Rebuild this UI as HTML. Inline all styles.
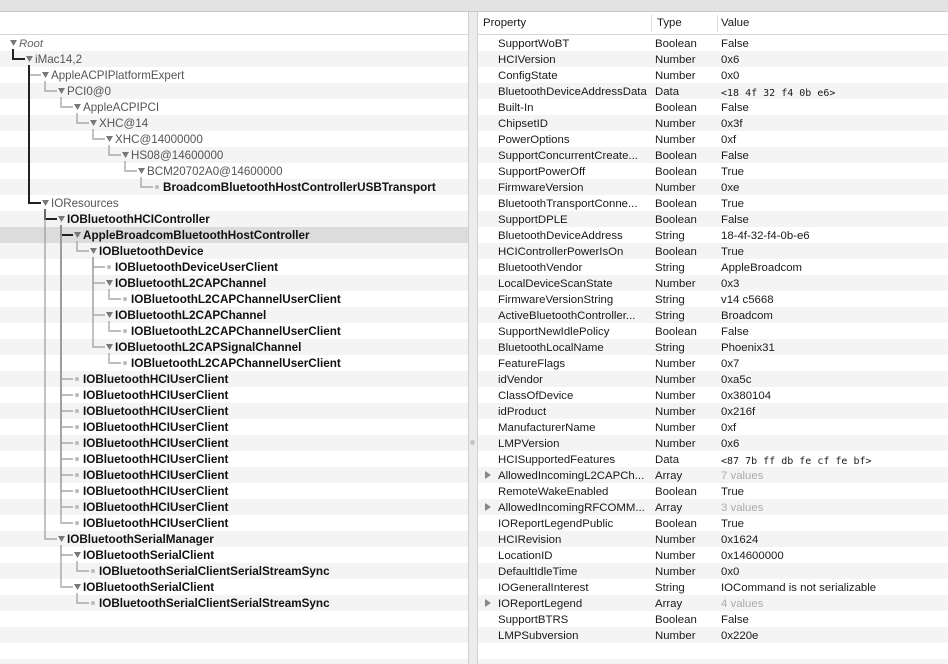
<!DOCTYPE html>
<html><head><meta charset="utf-8">
<style>
*{margin:0;padding:0;box-sizing:border-box}
body{width:948px;height:664px;overflow:hidden;background:#ececec;font-family:"Liberation Sans",Arial,sans-serif;font-size:11.4px;color:#1a1a1a;position:relative}
#top{position:absolute;left:0;top:0;width:948px;height:12px;background:#e3e3e3;border-bottom:1px solid #c8c8c8}
#left{position:absolute;left:0;top:12px;width:468px;height:652px;background:#fff;overflow:hidden}
#div{position:absolute;left:468px;top:12px;width:10px;height:652px;background:#ececec;border-left:1px solid #d0d0d0;border-right:1px solid #d0d0d0}
#dot{position:absolute;left:470px;top:440px;width:5px;height:5px;border-radius:50%;background:#c4c4c4}
#right{position:absolute;left:478px;top:12px;width:470px;height:652px;background:#fff;overflow:hidden}
.hdr{position:absolute;left:0;top:0;width:100%;height:23px;border-bottom:1px solid #d8d8d8;background:#fff}
.row{position:absolute;left:0;width:100%;height:16px;line-height:16px;white-space:nowrap}
.g{background:#f4f4f4}
.sel{background:#dcdcdc}
.t{position:absolute;top:0}
.mono{font-family:"DejaVu Sans Mono","Liberation Mono",monospace;font-size:10px}
svg{position:absolute;left:0;top:0}
</style></head><body>
<div id="top"></div>
<div id="left"><div class="hdr"></div><div id="lrows"></div><svg id="lsvg" width="468" height="652"></svg></div>
<div id="div"></div><div id="dot"></div>
<div id="right"><div class="hdr">
<span class="t" style="left:5px;top:5px">Property</span>
<div style="position:absolute;left:173px;top:3px;width:1px;height:17px;background:#ddd"></div>
<span class="t" style="left:179px;top:5px">Type</span>
<div style="position:absolute;left:239px;top:3px;width:1px;height:17px;background:#ddd"></div>
<span class="t" style="left:243px;top:5px">Value</span>
</div><div id="rrows"></div></div>
<script>
var tree=[[0,"Root","r"],[1,"iMac14,2","n"],[2,"AppleACPIPlatformExpert","n"],[3,"PCI0@0","n"],[4,"AppleACPIPCI","n"],[5,"XHC@14","n"],[6,"XHC@14000000","n"],[7,"HS08@14600000","n"],[8,"BCM20702A0@14600000","n"],[9,"BroadcomBluetoothHostControllerUSBTransport","l"],[2,"IOResources","n"],[3,"IOBluetoothHCIController","nb"],[4,"AppleBroadcomBluetoothHostController","nb"],[5,"IOBluetoothDevice","nb"],[6,"IOBluetoothDeviceUserClient","l"],[6,"IOBluetoothL2CAPChannel","nb"],[7,"IOBluetoothL2CAPChannelUserClient","l"],[6,"IOBluetoothL2CAPChannel","nb"],[7,"IOBluetoothL2CAPChannelUserClient","l"],[6,"IOBluetoothL2CAPSignalChannel","nb"],[7,"IOBluetoothL2CAPChannelUserClient","l"]];
for(var i=0;i<10;i++)tree.push([4,"IOBluetoothHCIUserClient","l"]);
tree.push([3,"IOBluetoothSerialManager","nb"],[4,"IOBluetoothSerialClient","nb"],[5,"IOBluetoothSerialClientSerialStreamSync","l"],[4,"IOBluetoothSerialClient","nb"],[5,"IOBluetoothSerialClientSerialStreamSync","l"]);
var h="",s="",top0=23;
for(var r=0;r<40;r++){var cls=r%2?" g":"";if(r==12)cls=" sel";h+='<div class="row'+cls+'" style="top:'+(top0+r*16)+'px"></div>';}
var dark={1:1,10:1,11:1,12:1};
tree.forEach(function(n,i){var d=n[0],y=top0+i*16,cy=y+8;
 var tx=19+16*d,style=n[2]=="r"?"font-style:italic;color:#666":(n[2]=="n"?"color:#555;font-size:11.6px":"font-weight:bold;color:#111;font-size:11.7px");
 h+='<span class="row" style="top:'+(y+1)+'px;background:none"><span class="t" style="left:'+tx+'px;'+style+'">'+n[1]+'</span></span>';
 var ax=10+16*d;
 if(n[2]=="l"){s+='<circle cx="'+(ax+3)+'" cy="'+cy+'" r="2" fill="#bbb"/>';}
 else s+='<path d="M'+ax+' '+(cy-3)+'h7l-3.5 6z" fill="#777"/>';
 if(d>0){var p=i-1;while(tree[p][0]>=d)p--;var px=13+16*(d-1),py=top0+p*16+14;
  var c=dark[i]?"#222":"#999",w=dark[i]?2:1.2;
  s+='<path d="M'+px+' '+py+'V'+cy+'H'+(ax-1)+'" stroke="'+c+'" stroke-width="'+w+'" fill="none"/>';}
});
document.getElementById("lrows").innerHTML=h;
document.getElementById("lsvg").innerHTML=s;
var props=[["SupportWoBT","Boolean","False"],["HCIVersion","Number","0x6"],["ConfigState","Number","0x0"],["BluetoothDeviceAddressData","Data","<18 4f 32 f4 0b e6>","m"],["Built-In","Boolean","False"],["ChipsetID","Number","0x3f"],["PowerOptions","Number","0xf"],["SupportConcurrentCreate...","Boolean","False"],["SupportPowerOff","Boolean","True"],["FirmwareVersion","Number","0xe"],["BluetoothTransportConne...","Boolean","True"],["SupportDPLE","Boolean","False"],["BluetoothDeviceAddress","String","18-4f-32-f4-0b-e6"],["HCIControllerPowerIsOn","Boolean","True"],["BluetoothVendor","String","AppleBroadcom"],["LocalDeviceScanState","Number","0x3"],["FirmwareVersionString","String","v14 c5668"],["ActiveBluetoothController...","String","Broadcom"],["SupportNewIdlePolicy","Boolean","False"],["BluetoothLocalName","String","Phoenix31"],["FeatureFlags","Number","0x7"],["idVendor","Number","0xa5c"],["ClassOfDevice","Number","0x380104"],["idProduct","Number","0x216f"],["ManufacturerName","Number","0xf"],["LMPVersion","Number","0x6"],["HCISupportedFeatures","Data","<87 7b ff db fe cf fe bf>","m"],["AllowedIncomingL2CAPCh...","Array","7 values","a"],["RemoteWakeEnabled","Boolean","True"],["AllowedIncomingRFCOMM...","Array","3 values","a"],["IOReportLegendPublic","Boolean","True"],["HCIRevision","Number","0x1624"],["LocationID","Number","0x14600000"],["DefaultIdleTime","Number","0x0"],["IOGeneralInterest","String","IOCommand is not serializable"],["IOReportLegend","Array","4 values","a"],["SupportBTRS","Boolean","False"],["LMPSubversion","Number","0x220e"]];
var rh="";
for(var r=0;r<40;r++){var y=top0+r*16,cls=r%2?" g":"";rh+='<div class="row'+cls+'" style="top:'+y+'px">';
 var p=props[r];if(p){var v=p[2].replace(/</g,"&lt;").replace(/>/g,"&gt;");
 if(p[3]=="a")rh+='<svg width="10" height="16" style="left:6px"><path d="M1 4l6 4-6 4z" fill="#888"/></svg>';
 rh+='<span class="t" style="left:20px;top:1px">'+p[0]+'</span><span class="t" style="left:177px;top:1px">'+p[1]+'</span><span class="t'+(p[3]=="m"?" mono":"")+'" style="left:243px;'+(p[3]=="a"?"color:#aaa;":"")+(p[3]=="m"?"top:3px;":"top:1px;")+'">'+v+'</span>';}
 rh+='</div>';}
document.getElementById("rrows").innerHTML=rh;
</script>
</body></html>
